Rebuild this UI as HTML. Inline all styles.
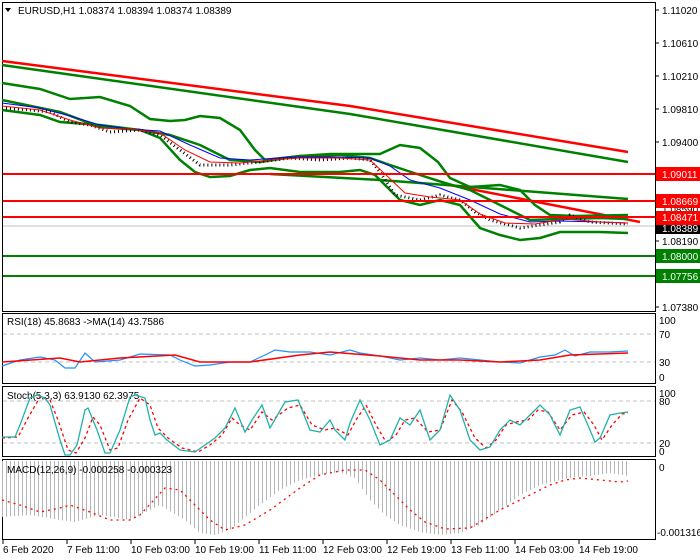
<!DOCTYPE html>
<html><head><meta charset="utf-8"><style>
html,body{margin:0;padding:0;background:#fff;}
svg{display:block;font-family:"Liberation Sans",sans-serif;font-size:10px;}
</style></head><body>
<svg width="700" height="560" viewBox="0 0 700 560" xmlns="http://www.w3.org/2000/svg">
<defs>
<pattern id="hb" x="2" y="0" width="4" height="10" patternUnits="userSpaceOnUse"><rect x="0" y="0" width="1" height="10" fill="#b4b4b4"/></pattern>
</defs>
<rect width="700" height="560" fill="#fff"/>
<g fill="none" stroke="#000" stroke-width="1">
<rect x="2.5" y="2.5" width="653" height="309"/>
<rect x="2.5" y="313.5" width="653" height="70"/>
<rect x="2.5" y="386.5" width="653" height="70"/>
<rect x="2.5" y="459.5" width="653" height="80"/>
</g>
<line x1="3" y1="226" x2="655" y2="226" stroke="#c0c0c0"/>
<polyline fill="none" stroke="#ff0000" stroke-width="2.5" points="2,61 350,106 628,152"/>
<polyline fill="none" stroke="#008000" stroke-width="2.5" points="2,65 350,114 628,162"/>
<polyline fill="none" stroke="#008000" stroke-width="2.5" points="270,174 380,180 420,183 628,199"/>
<polyline fill="none" stroke="#ff0000" stroke-width="2.5" points="450,185 640,222"/>
<polyline fill="none" stroke="#008000" stroke-width="2.5" points="2,83 40,89 70,99 100,97 130,106 150,119 170,121 185,120 200,116 220,118 240,130 255,150 265,160 300,156 330,154 380,154 400,145 420,148 438,162 450,178 470,187 500,185 520,190 535,205 550,215 575,216 628,215"/>
<polyline fill="none" stroke="#008000" stroke-width="2.5" points="2,100 60,112 100,127 140,130 170,135 200,145 230,160 260,162 300,156 340,155 370,158 390,165 420,175 445,183 470,190 490,200 510,210 530,220 560,219 600,218 628,219"/>
<polyline fill="none" stroke="#008000" stroke-width="2.5" points="2,110 40,115 60,122 100,125 140,130 160,138 180,160 195,172 210,177 230,176 250,170 270,168 300,172 340,172 360,170 375,175 390,190 400,200 420,205 440,200 460,205 480,228 500,235 520,240 540,238 560,232 600,232 628,233"/>
<polyline fill="none" stroke="#000" stroke-width="3" stroke-dasharray="1 3" points="2,108 30,110 50,112 70,122 90,125 110,132 140,130 160,135 180,150 200,165 230,165 260,162 290,158 320,160 350,158 370,160 380,172 395,195 420,200 440,195 460,200 475,212 490,220 520,228 540,225 560,222 570,215 590,222 628,224"/>
<polyline fill="none" stroke="#0000ff" stroke-width="1" points="2,103 40,108 70,116 100,125 130,129 160,131 190,145 220,158 250,160 290,157 330,157 370,158 390,166 410,180 440,188 470,200 500,214 530,222 560,221 600,222 628,223"/>
<polyline fill="none" stroke="#ff0000" stroke-width="1" points="2,106 40,110 70,120 100,128 130,129 160,133 185,150 210,162 240,163 270,160 300,158 340,158 370,160 385,174 405,193 430,197 460,200 480,214 505,223 535,224 565,219 600,222 628,223"/>
<line x1="3" y1="174" x2="655" y2="174" stroke="#ff0000" stroke-width="2"/>
<line x1="3" y1="201" x2="655" y2="201" stroke="#ff0000" stroke-width="2"/>
<line x1="3" y1="217" x2="655" y2="217" stroke="#ff0000" stroke-width="2"/>
<line x1="3" y1="256" x2="655" y2="256" stroke="#008000" stroke-width="2"/>
<line x1="3" y1="276" x2="655" y2="276" stroke="#008000" stroke-width="2"/>
<path d="M5,8 L11,8 L8,12 Z" fill="#000"/>
<text x="18" y="14" fill="#000">EURUSD,H1  1.08374 1.08394 1.08374 1.08389</text>
<g fill="#000">
<text x="662" y="14">1.11020</text><line x1="655" y1="10" x2="659" y2="10" stroke="#000"/>
<text x="662" y="47">1.10610</text><line x1="655" y1="43" x2="659" y2="43" stroke="#000"/>
<text x="662" y="80">1.10210</text><line x1="655" y1="76" x2="659" y2="76" stroke="#000"/>
<text x="662" y="113">1.09810</text><line x1="655" y1="109" x2="659" y2="109" stroke="#000"/>
<text x="662" y="146">1.09400</text><line x1="655" y1="142" x2="659" y2="142" stroke="#000"/>
<text x="662" y="213">1.08590</text>
<text x="662" y="245">1.08190</text><line x1="655" y1="241" x2="659" y2="241" stroke="#000"/>
<text x="662" y="311">1.07380</text><line x1="655" y1="307" x2="659" y2="307" stroke="#000"/>
</g>
<rect x="656" y="167" width="44" height="14" fill="#ff0000"/><text x="662" y="178" fill="#fff">1.09011</text>
<rect x="656" y="194" width="44" height="14" fill="#ff0000"/><text x="662" y="205" fill="#fff">1.08669</text>
<rect x="656" y="211" width="44" height="14" fill="#ff0000"/><text x="662" y="221" fill="#fff">1.08471</text>
<rect x="656" y="225" width="44" height="9" fill="#000"/><text x="662" y="232" fill="#fff">1.08389</text>
<rect x="656" y="249" width="44" height="14" fill="#008000"/><text x="662" y="260" fill="#fff">1.08000</text>
<rect x="656" y="269" width="44" height="14" fill="#008000"/><text x="662" y="280" fill="#fff">1.07756</text>
<line x1="3" y1="334" x2="655" y2="334" stroke="#c0c0c0" stroke-dasharray="4 3"/>
<line x1="3" y1="362" x2="655" y2="362" stroke="#c0c0c0" stroke-dasharray="4 3"/>
<text x="7" y="325" fill="#000">RSI(18) 45.8683  -&gt;MA(14) 43.7586</text>
<polyline fill="none" stroke="#1e90ff" stroke-width="1.2" points="2,366 20,360 40,357 55,360 65,368 75,368 85,353 95,362 120,360 140,354 170,355 180,360 195,366 210,365 230,362 250,362 265,355 275,350 290,352 310,352 330,355 350,350 360,353 380,356 400,360 420,358 440,360 460,358 480,360 500,362 520,363 540,357 555,355 565,350 575,356 590,352 610,352 628,351"/>
<polyline fill="none" stroke="#ff0000" stroke-width="1.5" points="2,362 60,358 80,362 120,358 175,355 200,362 250,362 300,355 330,352 380,356 420,360 460,360 500,362 540,360 570,355 628,353"/>
<g fill="#000"><text x="659" y="324">100</text><text x="659" y="338">70</text><text x="659" y="366">30</text><text x="659" y="381">0</text></g>
<line x1="3" y1="401" x2="655" y2="401" stroke="#c0c0c0" stroke-dasharray="4 3"/>
<line x1="3" y1="443" x2="655" y2="443" stroke="#c0c0c0" stroke-dasharray="4 3"/>
<text x="7" y="399" fill="#000">Stoch(5,3,3) 63.9130 62.3975</text>
<polyline fill="none" stroke="#ff0000" stroke-width="1.3" stroke-dasharray="3 3" points="2,438 18,437 28,418 40,397 50,400 58,420 68,450 76,453 85,438 93,417 100,425 110,450 118,448 128,420 140,398 150,405 158,428 168,438 182,448 198,452 210,445 222,435 232,418 240,425 250,430 262,412 272,420 288,408 300,405 312,425 325,430 335,428 348,435 356,420 366,405 376,425 386,442 396,435 405,420 415,418 428,432 440,430 452,400 462,412 475,438 486,448 496,440 506,425 516,422 528,420 538,410 548,412 560,430 572,415 584,412 594,425 602,440 612,425 622,414 628,413"/>
<polyline fill="none" stroke="#20b2aa" stroke-width="1.3" points="2,437 15,437 20,425 30,398 37,395 45,398 50,405 60,440 65,455 70,455 77,445 85,410 88,408 97,430 105,453 110,453 120,430 130,397 135,395 145,398 150,420 155,435 160,433 167,440 180,450 195,452 205,445 215,438 225,428 235,408 245,432 252,420 262,405 270,428 285,402 298,400 310,430 320,432 330,420 335,430 345,440 350,423 360,400 370,420 380,445 390,440 400,418 410,425 420,410 430,440 440,430 450,395 460,410 470,440 480,450 490,447 500,430 510,420 520,425 530,415 540,405 550,415 560,435 570,410 580,407 590,430 595,442 600,438 610,415 620,413 628,412"/>
<g fill="#000"><text x="659" y="397">100</text><text x="659" y="405">80</text><text x="659" y="447">20</text><text x="659" y="455">0</text></g>
<polygon fill="url(#hb)" points="2,461 2,517 30,515 60,520 75,522 100,515 130,520 160,505 185,520 200,533 215,535 230,530 260,505 280,490 300,480 320,475 340,472 355,478 370,500 385,515 400,525 420,532 440,535 460,533 480,525 500,510 520,495 540,485 560,480 575,477 590,476 610,473 628,476 628,461"/>
<polyline fill="none" stroke="#ff0000" stroke-width="1.3" stroke-dasharray="2 4" points="2,500 20,505 40,512 60,508 70,505 90,512 110,520 130,520 140,515 165,488 180,490 195,505 210,520 225,530 245,525 270,510 300,488 320,475 345,470 365,470 380,480 395,495 410,510 425,522 445,529 470,528 500,510 530,495 550,485 565,480 580,478 600,480 620,482 628,481"/>
<text x="7" y="473" fill="#000">MACD(12,26,9) -0.000258 -0.000323</text>
<g fill="#000"><text x="659" y="471">0</text><text x="657" y="536">-0.001316</text></g>
<g stroke="#000"><line x1="3" y1="540" x2="3" y2="544"/><line x1="67" y1="540" x2="67" y2="544"/><line x1="131" y1="540" x2="131" y2="544"/><line x1="195" y1="540" x2="195" y2="544"/><line x1="259" y1="540" x2="259" y2="544"/><line x1="323" y1="540" x2="323" y2="544"/><line x1="387" y1="540" x2="387" y2="544"/><line x1="451" y1="540" x2="451" y2="544"/><line x1="515" y1="540" x2="515" y2="544"/><line x1="579" y1="540" x2="579" y2="544"/></g>
<g fill="#000">
<text x="3" y="553">6 Feb 2020</text>
<text x="67" y="553">7 Feb 11:00</text>
<text x="131" y="553">10 Feb 03:00</text>
<text x="195" y="553">10 Feb 19:00</text>
<text x="259" y="553">11 Feb 11:00</text>
<text x="323" y="553">12 Feb 03:00</text>
<text x="387" y="553">12 Feb 19:00</text>
<text x="451" y="553">13 Feb 11:00</text>
<text x="515" y="553">14 Feb 03:00</text>
<text x="579" y="553">14 Feb 19:00</text>
</g>
</svg>
</body></html>
